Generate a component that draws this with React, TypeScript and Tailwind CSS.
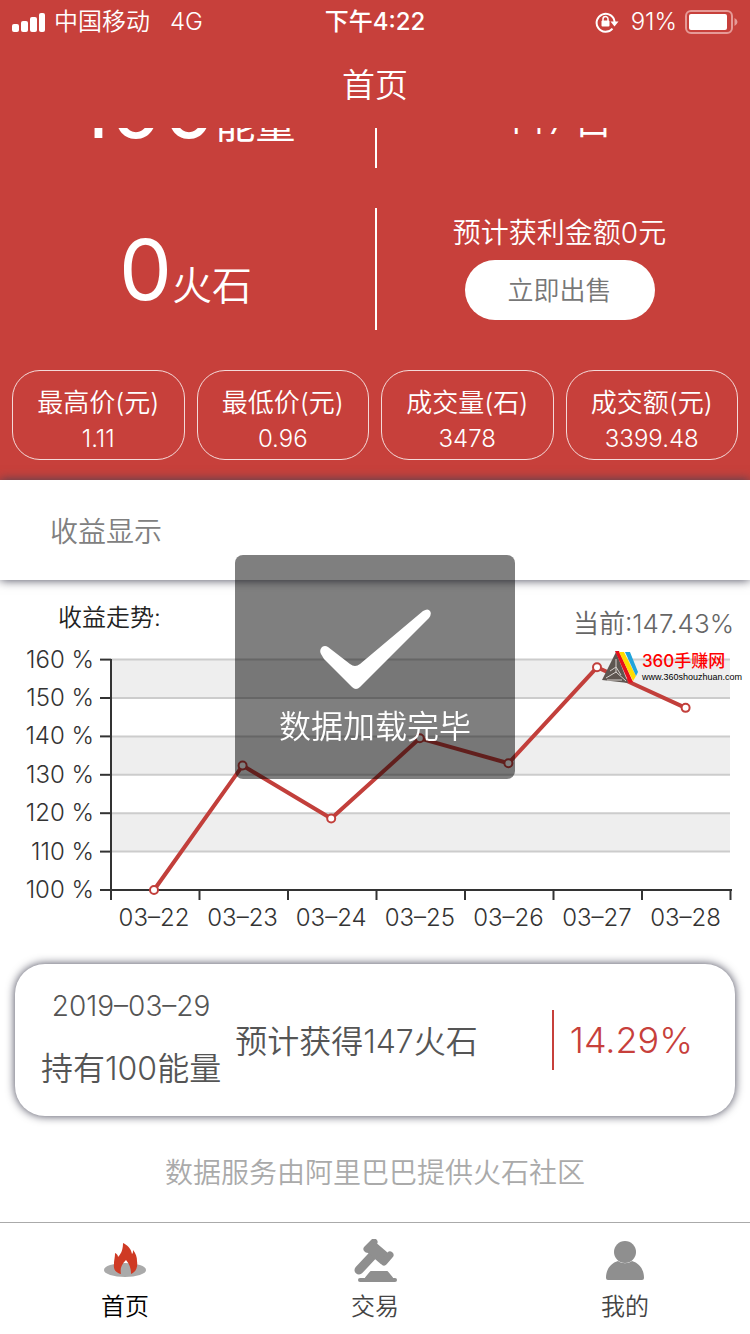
import React, { useState } from 'react';

interface Stat {
  label: string;
  value: string;
}

const stats: Stat[] = [
  { label: '最高价(元)', value: '1.11' },
  { label: '最低价(元)', value: '0.96' },
  { label: '成交量(石)', value: '3478' },
  { label: '成交额(元)', value: '3399.48' },
];

const trend = [
  { date: '03–22', rate: 100 },
  { date: '03–23', rate: 132.4 },
  { date: '03–24', rate: 118.6 },
  { date: '03–25', rate: 139.5 },
  { date: '03–26', rate: 133 },
  { date: '03–27', rate: 158 },
  { date: '03–28', rate: 147.43 },
];

const StatusBar = () => (
  <div className="flex h-10 items-center px-3 pt-1 text-[24px] text-white">
    <div className="flex flex-1 items-center gap-2">
      <svg width="34" height="22" viewBox="0 0 34 22" fill="#fff">
        <rect x="0" y="13" width="7" height="8" rx="2" />
        <rect x="9" y="10" width="7" height="11" rx="2" />
        <rect x="18" y="6" width="7" height="15" rx="2" />
        <rect x="27" y="2" width="6" height="19" rx="2" />
      </svg>
      <span>中国移动</span>
      <span className="ml-3">4G</span>
    </div>
    <div className="text-center font-medium">下午4:22</div>
    <div className="flex flex-1 items-center justify-end gap-2">
      <svg width="24" height="22" viewBox="0 0 24 22" fill="none" stroke="#fff" strokeWidth="2">
        <path d="M17.5 17.6A9 9 0 1 1 19.6 11" />
        <path d="M15.5 10.5h8l-4 5z" fill="#fff" stroke="none" />
        <rect x="6.500" y="9.500" width="8" height="6" rx="1" fill="#fff" stroke="none" />
        <path d="M8 10V8a2.500 2.500 0 0 1 5 0v2" strokeWidth="1.500" />
      </svg>
      <span className="ml-1">91%</span>
      <svg width="53" height="24" viewBox="0 0 53 24">
        <rect x="1" y="1" width="46" height="22" rx="5" fill="none" stroke="#e69a97" strokeWidth="2" />
        <rect x="4" y="4" width="38" height="16" rx="2" fill="#fff" />
        <path d="M49.500 8q3 1.500 3 4t-3 4z" fill="#e69a97" />
      </svg>
    </div>
  </div>
);

const TrendChart = () => {
  const y = (rate: number) => 250 - (rate - 100) * 3.84;
  const x = (i: number) => 154 + i * 88.6;
  const levels = [100, 110, 120, 130, 140, 150, 160];
  return (
    <svg viewBox="0 0 750 300" className="block w-full" role="img" aria-label="收益走势">
      {[150, 130, 110].map((v) => (
        <rect key={v} x="111" y={y(v + 10)} width="619" height="38.4" fill="#eee" />
      ))}
      {levels.slice(1).map((v) => (
        <path key={v} d={`M111 ${y(v)}H730`} stroke="#ccc" strokeWidth="2" />
      ))}
      {levels.map((v) => (
        <g key={v}>
          <path d={`M100 ${y(v)}h11`} stroke="#333" strokeWidth="2" />
          <text x="94" y={y(v) + 8} textAnchor="end" fontSize="24" fill="#333">{v} %</text>
        </g>
      ))}
      <path d="M111 19v231H732" stroke="#333" strokeWidth="2" fill="none" />
      {[0, 1, 2, 3, 4, 5, 6, 7].map((i) => (
        <path key={i} d={`M${111 + i * 88.5} 250v10`} stroke="#333" strokeWidth="2" />
      ))}
      <polyline points={trend.map((p, i) => `${x(i)},${y(p.rate)}`).join(' ')} fill="none" stroke="#c23f3b" strokeWidth="4" strokeLinejoin="round" />
      {trend.map((p, i) => (
        <g key={p.date}>
          <circle cx={x(i)} cy={y(p.rate)} r="4" fill="#fff" stroke="#c23f3b" strokeWidth="2" />
          <text x={x(i)} y="286" textAnchor="middle" fontSize="24" fill="#333">{p.date}</text>
        </g>
      ))}
    </svg>
  );
};

const SiteMark = () => (
  <div className="absolute top-[71px] right-2 flex items-start gap-1">
    <svg width="36" height="34" viewBox="0 0 36 34">
      <path d="M14 1L0 29l26 3z" fill="#5e5651" />
      <path d="M14 8v14M4 27l10-6 10 9M8 20l6-4 5 8M5 29h15" stroke="#d5d1ce" strokeWidth="1" fill="none" />
      <path d="M13 0h4l14 31-4 1z" fill="#e60f1d" />
      <path d="M17 1h5l12 24-3 5z" fill="#ffdc00" />
      <path d="M23 1h5l8 20-2 4z" fill="#20a4dc" />
    </svg>
    <div>
      <div className="text-[17px] leading-5 font-medium text-[#f00]">360手赚网</div>
      <div className="font-['Liberation_Sans',sans-serif] text-[9px] leading-3 font-medium text-black">www.360shouzhuan.com</div>
    </div>
  </div>
);

const FlameIcon = () => (
  <svg width="44" height="44" viewBox="0 0 44 44">
    <ellipse cx="22" cy="31" rx="21" ry="7" fill="#aaa" />
    <path d="M20 4c4 2 8 5 9 11 1-1 1-2 1-4 3 4 4 7 4 11 1 6-1 11-6 13 0-5-1-9-5-14-5 5-6 9-5 14-5-1-8-5-7-10 0-4 1-6 1-11 2 1 3 2 3 4 4-4 5-9 5-14z" fill="#cf3a24" />
  </svg>
);

const GavelIcon = () => (
  <svg width="48" height="44" viewBox="0 0 48 44" fill="#8f8f8f" stroke="#8f8f8f">
    <path d="M8 31L23 15" strokeWidth="9" strokeLinecap="round" />
    <path d="M20 8L34 20" strokeWidth="13" />
    <path d="M16 10L23 3M33 23L39 16" strokeWidth="7" strokeLinecap="round" />
    <path d="M20 33h16l5 6H15z" strokeWidth="2" strokeLinejoin="round" />
    <rect x="7" y="39" width="39" height="4" rx="2" stroke="none" />
  </svg>
);

const UserIcon = () => (
  <svg width="44" height="44" viewBox="0 0 44 44" fill="#8f8f8f">
    <circle cx="22" cy="13" r="11" />
    <path d="M3 39c0-9 5-15 12-17 4 3 10 3 14 0 7 2 12 8 12 17q0 2-2 2H5q-2 0-2-2z" />
  </svg>
);

const tabs = [
  { key: 'home', label: '首页', icon: FlameIcon },
  { key: 'trade', label: '交易', icon: GavelIcon },
  { key: 'mine', label: '我的', icon: UserIcon },
];

const App: React.FC = () => {
  const [activeTab, setActiveTab] = useState('home');

  return (
    <div className="flex min-h-screen flex-col bg-white font-['Inter','Noto_Sans_CJK_SC',sans-serif] font-[350]">
      <header className="bg-[#c7403b]">
        <StatusBar />
        <h1 className="flex h-[88px] items-center justify-center pt-1 text-[33px] font-[350] text-white">首页</h1>
      </header>

      <section className="flex flex-col bg-[#c7403b] text-white">
        {/* 上一行随页面滚动，只露出底部 */}
        <div className="flex h-10 items-end overflow-hidden">
          <div className="grid h-[122px] flex-1 grid-cols-2 leading-none">
            <div className="flex items-baseline justify-center pt-5 pr-1 font-normal">
              <span className="text-[84px]">100</span>
              <span className="text-[40px]">能量</span>
            </div>
            <div className="flex items-baseline justify-center gap-1 border-l-2 border-white pt-[54px] pr-2">
              <span className="text-[40px]">147</span>
              <span className="text-[40px]">日</span>
            </div>
          </div>
        </div>
        <div className="mt-10 grid h-[122px] grid-cols-2">
          <div className="flex items-baseline justify-center pt-5 pr-1 leading-none">
            <span className="text-[84px] font-normal">0</span>
            <span className="text-[40px]">火石</span>
          </div>
          <div className="flex flex-col items-center border-l-2 border-white pt-1 pr-2">
            <span className="text-[28px] leading-[42px]">预计获利金额0元</span>
            <button className="mt-[6px] h-[60px] w-[190px] rounded-full bg-white text-[26px] text-[#777]">立即出售</button>
          </div>
        </div>
        <div className="mt-10 mb-5 grid grid-cols-4 gap-3 px-3">
          {stats.map((s) => (
            <div key={s.label} className="h-[90px] rounded-[28px] border border-white/80 pt-3 text-center">
              <div className="text-[26px] leading-10">{s.label}</div>
              <div className="text-[24px] leading-8">{s.value}</div>
            </div>
          ))}
        </div>
      </section>

      <h2 className="relative flex h-[100px] items-center bg-white pt-1 pl-[50px] text-[28px] font-[350] text-[#808080] shadow-[0_0_10px_#445]">收益显示</h2>

      <section className="relative">
        <div className="flex h-[60px] items-start justify-between pr-4 pl-[58px]">
          <span className="pt-5 text-[24px] leading-9 text-[#222]">收益走势:</span>
          <span className="pt-6 text-[26px] leading-10 text-[#666]">当前:147.43%</span>
        </div>
        <TrendChart />
        <SiteMark />
      </section>

      <section className="mx-[15px] mt-6 flex h-[152px] items-center rounded-[30px] bg-white px-[26px] text-[#555] shadow-[0_0_10px_#445]">
        <div className="text-center">
          <div className="text-[28px] leading-[58px]">2019–03–29</div>
          <div className="text-[32px] leading-[68px]">持有100能量</div>
        </div>
        <div className="ml-[14px] pt-1 text-[32px]">预计获得147火石</div>
        <div className="ml-auto flex h-[60px] items-center border-l-2 border-[#c7403b] pr-4 pl-4 text-[36px] text-[#c7403b]">14.29%</div>
      </section>

      <p className="mt-9 text-center text-[28px] leading-[42px] text-[#aaa]">数据服务由阿里巴巴提供火石社区</p>

      <nav className="mt-auto grid h-28 grid-cols-3 border-t border-[#aaa]">
        {tabs.map(({ key, label, icon: Icon }) => (
          <button
            key={key}
            onClick={() => setActiveTab(key)}
            className={`flex flex-col items-center pt-4 text-[24px] leading-10 ${activeTab === key ? 'text-black' : 'text-[#444]'}`}
          >
            <Icon />
            <span className="mt-1">{label}</span>
          </button>
        ))}
      </nav>

      <div className="pointer-events-none fixed inset-0 flex items-center justify-center">
        <div role="status" className="flex h-[224px] w-[280px] flex-col items-center rounded-lg bg-black/50 pt-[54px] text-white">
          <svg width="112" height="82" viewBox="0 0 112 82" fill="#fff">
            <path d="M2 45q-2-4 1-7 3-2 6 0l22 17q5 4 10 0L104 2q5-3 7 0 2 3-1 7L41 78q-4 4-8 0L5 50z" />
          </svg>
          <span className="mt-4 text-[32px] leading-10">数据加载完毕</span>
        </div>
      </div>
    </div>
  );
};

export default App;
